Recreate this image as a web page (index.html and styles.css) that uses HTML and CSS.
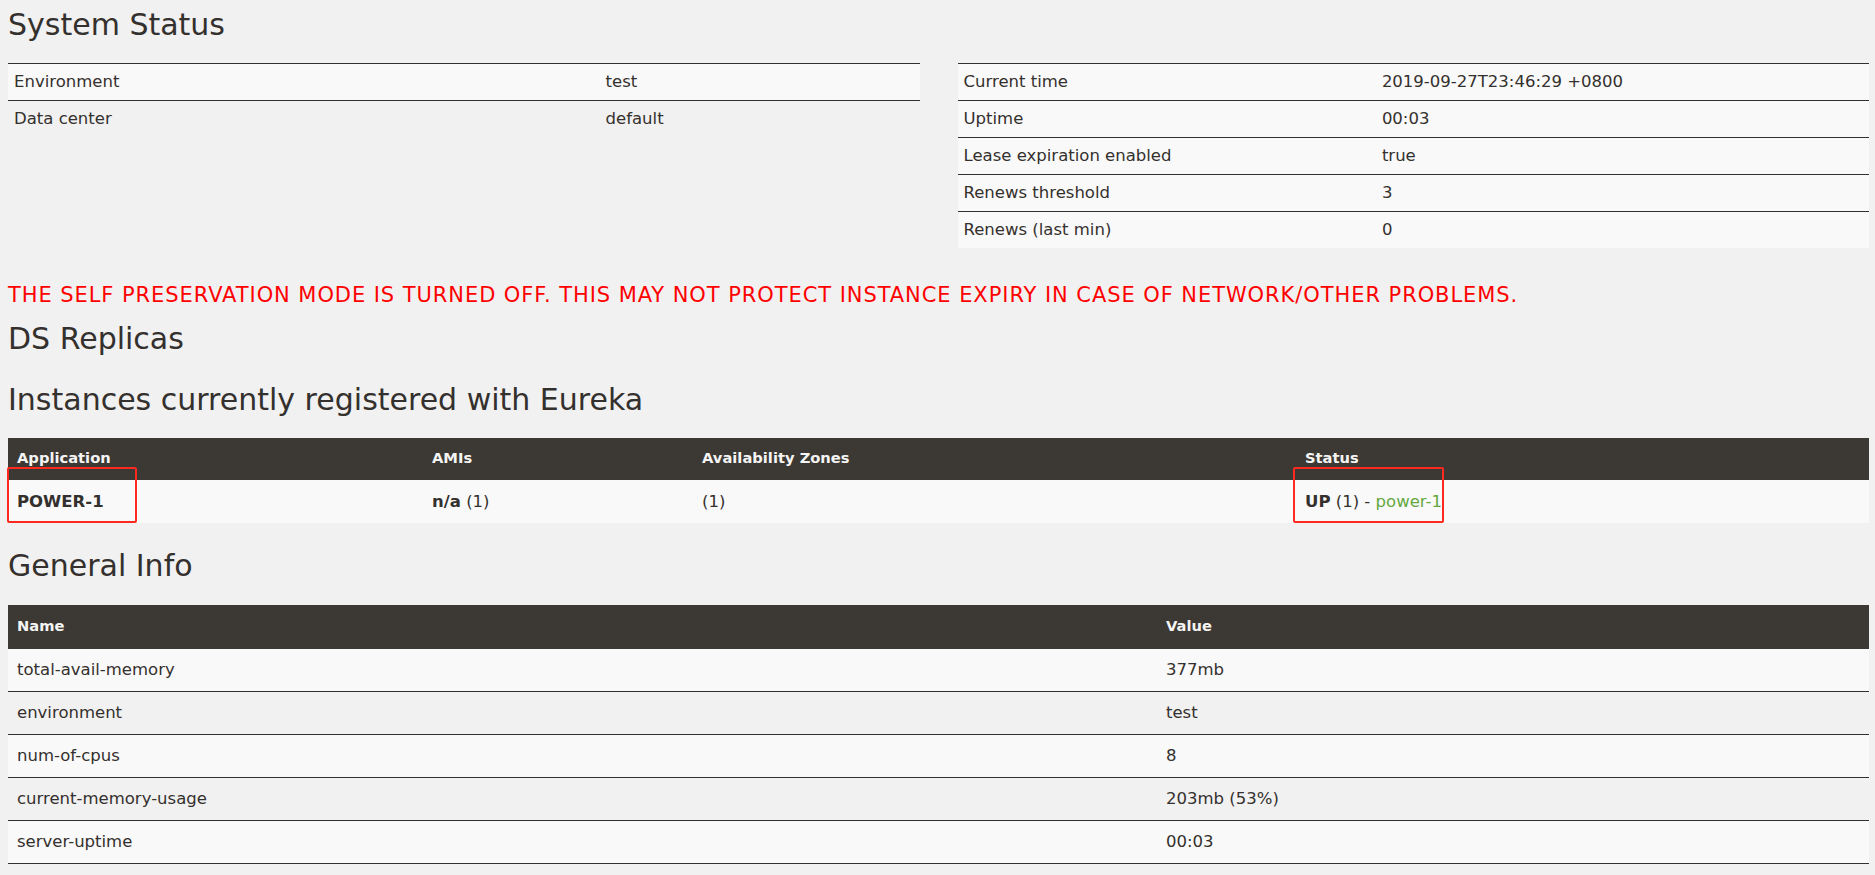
FILE: index.html
```html
<!DOCTYPE html>
<html lang="en">
<head>
<meta charset="utf-8">
<title>Eureka</title>
<link rel="stylesheet" href="styles.css">
</head>
<body>
<div class="page">
  <h1>System Status</h1>
  <div class="status-grid">
    <table class="kv kv-left">
      <tbody>
        <tr class="light"><td>Environment</td><td>test</td></tr>
        <tr><td>Data center</td><td>default</td></tr>
      </tbody>
    </table>
    <table class="kv kv-right">
      <tbody>
        <tr class="light"><td>Current time</td><td>2019-09-27T23:46:29 +0800</td></tr>
        <tr class="light"><td>Uptime</td><td>00:03</td></tr>
        <tr class="light"><td>Lease expiration enabled</td><td>true</td></tr>
        <tr class="light"><td>Renews threshold</td><td>3</td></tr>
        <tr class="light"><td>Renews (last min)</td><td>0</td></tr>
      </tbody>
    </table>
  </div>

  <p class="warning">THE SELF PRESERVATION MODE IS TURNED OFF. THIS MAY NOT PROTECT INSTANCE EXPIRY IN CASE OF NETWORK/OTHER PROBLEMS.</p>

  <h1 class="h1-replicas">DS Replicas</h1>

  <h1>Instances currently registered with Eureka</h1>
  <table class="data instances">
    <thead>
      <tr>
        <th class="col-app">Application</th>
        <th class="col-ami">AMIs</th>
        <th class="col-zone">Availability Zones</th>
        <th>Status</th>
      </tr>
    </thead>
    <tbody>
      <tr class="light">
        <td class="marked"><span class="hl hl-app"></span><b>POWER-1</b></td>
        <td><b>n/a</b> (1)</td>
        <td>(1)</td>
        <td class="marked"><span class="hl hl-status"></span><b>UP</b> (1) - <a href="#" class="inst">power-1</a></td>
      </tr>
    </tbody>
  </table>

  <h1 class="h1-info">General Info</h1>
  <table class="data info">
    <thead>
      <tr>
        <th class="col-name">Name</th>
        <th>Value</th>
      </tr>
    </thead>
    <tbody>
      <tr class="light"><td>total-avail-memory</td><td>377mb</td></tr>
      <tr><td>environment</td><td>test</td></tr>
      <tr class="light"><td>num-of-cpus</td><td>8</td></tr>
      <tr><td>current-memory-usage</td><td>203mb (53%)</td></tr>
      <tr class="light"><td>server-uptime</td><td>00:03</td></tr>
    </tbody>
  </table>
</div>
</body>
</html>
```

FILE: styles.css
```css
* {
  box-sizing: border-box;
}

html,
body {
  margin: 0;
  background: #f1f1f1;
}

body {
  font-family: "DejaVu Sans", "Liberation Sans", sans-serif;
  font-size: 16.5px;
  line-height: 20px;
  color: #34302d;
}

.page {
  padding: 7px 6px 0 8px;
}

h1 {
  font-size: 30px;
  line-height: 36px;
  font-weight: normal;
  color: #34302d;
  margin: 0 0 20px;
}

.h1-replicas {
  margin-bottom: 25px;
}

.h1-info {
  margin-bottom: 21px;
}

table {
  width: 100%;
  border-collapse: separate;
  border-spacing: 0;
  table-layout: fixed;
}

/* System status key/value tables */
.status-grid {
  display: grid;
  grid-template-columns: 1fr 1fr;
  column-gap: 38px;
  align-items: start;
  margin-bottom: 34px;
}

.kv td {
  padding: 8px 6px;
  border-top: 1px solid #34302d;
  white-space: nowrap;
}

.kv-left td:first-child {
  width: 64.9%;
}

.kv-right td:first-child {
  width: 45.9%;
}

tr.light td {
  background: #f9f9f9;
}

/* warning */
.warning {
  margin: 0 0 13px;
  font-size: 21px;
  line-height: 26px;
  letter-spacing: 0.93px;
  color: #ff0000;
  white-space: nowrap;
}

/* dark-header data tables */
.data th {
  background: #3c3833;
  color: #f4f4f4;
  font-size: 14.7px;
  font-weight: bold;
  text-align: left;
  padding: 10px 9px 12px;
  line-height: 20px;
}

.data td {
  padding: 12px 9px 11px;
  white-space: nowrap;
}

.instances {
  margin-bottom: 25px;
}

.col-app {
  width: 415px;
}

.col-ami {
  width: 270px;
}

.col-zone {
  width: 603px;
}

.info th {
  padding: 11px 9px 13px;
}

.info td {
  padding: 11px 9px;
  border-bottom: 1px solid #34302d;
}

.col-name {
  width: 1149px;
}

.marked {
  position: relative;
}

.hl {
  position: absolute;
  top: -13px;
  height: 56px;
  border: 2px solid #ff2a1f;
  border-radius: 2px;
}

.hl-app {
  left: -1px;
  width: 130px;
}

.hl-status {
  left: -3px;
  width: 151px;
}

a.inst {
  color: #65a83f;
  text-decoration: none;
}
```
